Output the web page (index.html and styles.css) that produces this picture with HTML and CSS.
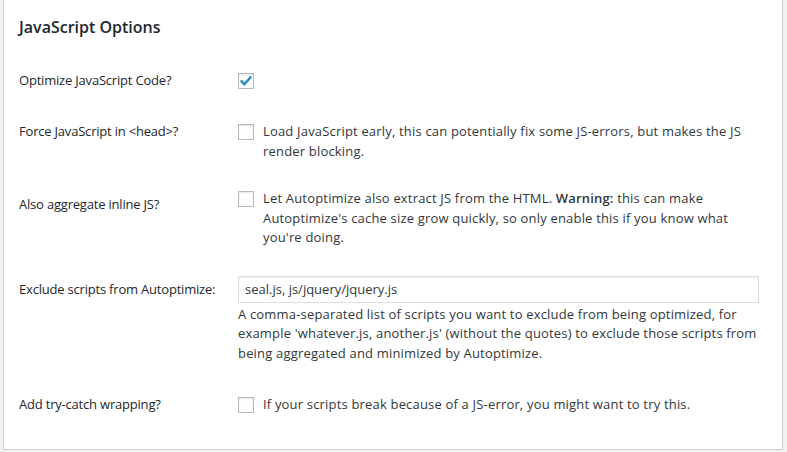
FILE: index.html
```html
<!DOCTYPE html>
<html lang="en">
<head>
<meta charset="utf-8">
<title>JavaScript Options</title>
<link rel="stylesheet" href="styles.css">
</head>
<body>
<div class="postbox">
  <h2 class="title">JavaScript Options</h2>
  <div class="rows">
    <div class="row">
      <div class="label">Optimize JavaScript Code?</div>
      <div class="field">
        <span class="checkbox checked"><svg viewBox="0 0 16 16" width="16" height="16"><path d="M3.6 8.3 L6.4 11.2 L12.4 4.4" fill="none" stroke="#1e8cbe" stroke-width="2.4" stroke-linecap="square"/></svg></span>
      </div>
    </div>
    <div class="row row--loose">
      <div class="label">Force JavaScript in &lt;head&gt;?</div>
      <div class="field">
        <span class="checkbox"></span>
        <span class="text">Load JavaScript early, this can potentially fix some JS-errors, but makes the JS render blocking.</span>
      </div>
    </div>
    <div class="row">
      <div class="label label--low">Also aggregate inline JS?</div>
      <div class="field">
        <span class="checkbox"></span>
        <span class="text">Let Autoptimize also extract JS from the HTML. <strong>Warning:</strong> this can make Autoptimize's cache size grow quickly, so only enable this if you know what you're doing.</span>
      </div>
    </div>
    <div class="row">
      <div class="label label--input">Exclude scripts from Autoptimize:</div>
      <div class="field field--stack">
        <div class="textinput">seal.js, js/jquery/jquery.js</div>
        <p class="description">A comma-separated list of scripts you want to exclude from being optimized, for example 'whatever.js, another.js' (without the quotes) to exclude those scripts from being aggregated and minimized by Autoptimize.</p>
      </div>
    </div>
    <div class="row row--loose">
      <div class="label">Add try-catch wrapping?</div>
      <div class="field">
        <span class="checkbox"></span>
        <span class="text">If your scripts break because of a JS-error, you might want to try this.</span>
      </div>
    </div>
  </div>
</div>
</body>
</html>
```
FILE: styles.css
```css
html, body {
  margin: 0;
  padding: 0;
  background: #f1f1f1;
}

body {
  font-family: "Open Sans", "Noto Sans", sans-serif;
  font-size: 13px;
  color: #32373c;
}

.postbox {
  margin: 0 4px 0 3px;
  background: #fff;
  border: 1px solid #ccd0d4;
  border-top: none;
  box-shadow: 0 1px 1px rgba(0, 0, 0, 0.04);
  padding: 17px 23px 20px 15px;
  height: 412px;
}

.title {
  margin: 0;
  font-size: 16px;
  font-weight: 600;
  line-height: 20px;
  color: #23282d;
}

.rows {
  margin-top: 20px;
}

.row {
  display: grid;
  grid-template-columns: 219px 1fr;
  align-items: start;
  padding: 14px 0;
  line-height: 19.5px;
}

.row--loose {
  padding-top: 17.5px;
}

.label {
  color: #23282d;
  letter-spacing: -0.2px;
}

.label--low {
  padding-top: 6px;
}

.label--input {
  padding-top: 4px;
}

.field {
  display: flex;
  align-items: flex-start;
  letter-spacing: 0.18px;
}

.field--stack {
  flex-direction: column;
  align-items: stretch;
}

.checkbox {
  flex: none;
  box-sizing: border-box;
  width: 16px;
  height: 16px;
  margin-top: 2px;
  margin-right: 9px;
  border: 1px solid #b4b9be;
  background: #fff;
  box-shadow: inset 0 1px 2px rgba(0, 0, 0, 0.1);
  position: relative;
}

.checkbox svg {
  position: absolute;
  left: -1px;
  top: -1px;
}

.text strong {
  font-weight: 600;
}

.textinput {
  box-sizing: border-box;
  width: 100%;
  height: 27px;
  border: 1px solid #ddd;
  box-shadow: inset 0 1px 2px rgba(0, 0, 0, 0.07);
  padding: 0 6px;
  line-height: 25px;
  color: #32373c;
  letter-spacing: 0;
}

.description {
  margin: 2px 0 0;
}
```
